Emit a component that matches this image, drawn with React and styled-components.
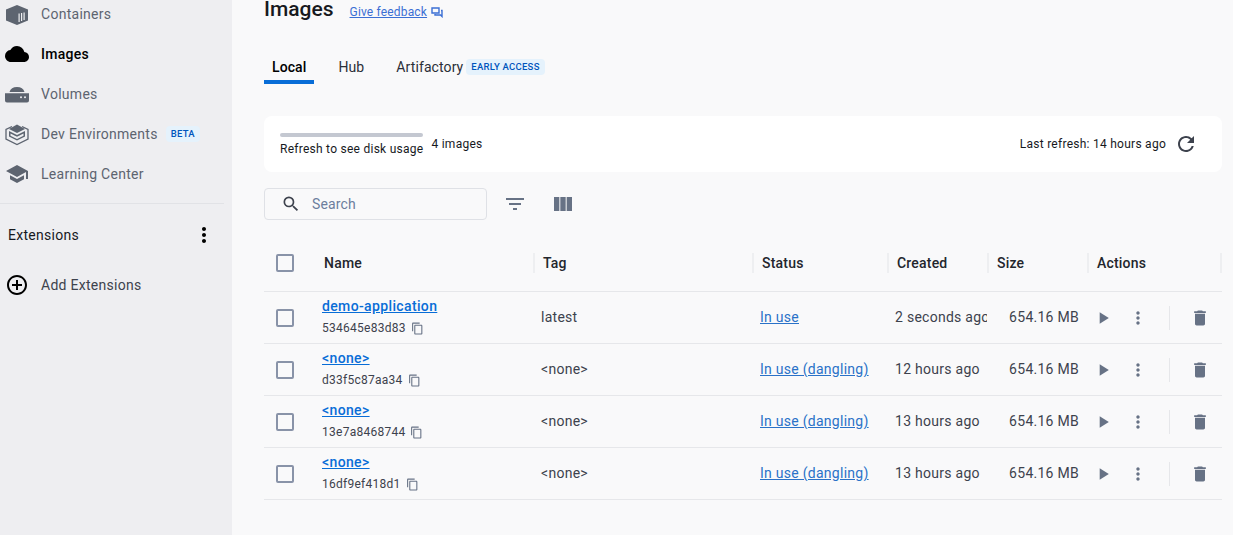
import React from "react";
import styled, {createGlobalStyle} from "styled-components";
import {
    MdAddCircleOutline, MdCloud, MdContentCopy, MdDelete, MdFilterList, MdMoreVert,
    MdPlayArrow, MdRefresh, MdSchool, MdSearch, MdViewColumn
} from "react-icons/md";

const Global = createGlobalStyle`
  html, body { margin: 0; height: 100%; overflow: hidden; }
  body { font-family: Roboto, "Liberation Sans", sans-serif; background: #f9f9fa; color: #17191e; }
`;

const Page = styled.div`display: flex; height: 535px; width: 1233px; overflow: hidden;`;

const Sidebar = styled.nav`width: 232px; flex: none; background: #eeeef1; margin-top: -6px;`;
const NavRow = styled.div`
  height: 40px; display: flex; align-items: center; padding-left: 5px; font-size: 14px; letter-spacing: .28px;
  color: ${p => p.$active ? "#000" : "#5d6470"};
  font-weight: ${p => p.$active ? 500 : 400};
  svg { flex: none; }
`;
const NavIcon = styled.span`width: 36px; height: 24px; display: flex; align-items: center; justify-content: flex-start; flex: none;`;
const Pill = styled.span`
  background: #e5f2fc; color: #0055bc; font-size: 9.5px; font-weight: 500; letter-spacing: .25px;
  border-radius: 4px; padding: 2px 5px; margin-left: ${p => p.$gap || 8}px; line-height: 12px;
`;
const Divider = styled.div`height: 1px; width: 224px; background: #e1e2e6; margin-top: 9px;`;
const ExtensionsRow = styled.div`
  height: 62px; display: flex; align-items: center; justify-content: space-between;
  padding-left: 8px; width: 208px; font-size: 14px; letter-spacing: .28px; color: #17191e;
`;
const AddRow = styled(NavRow)`color: #3d424d; height: 38px;`;

const Main = styled.main`flex: 1; padding: 0 11px 0 32px; min-width: 0;`;
const TitleRow = styled.div`display: flex; align-items: center; height: 18px; gap: 16px;`;
const Title = styled.h1`margin: 0; font-size: 21px; font-weight: 500; line-height: 18px; color: #17191e;`;
const Feedback = styled.a`
  font-size: 12px; letter-spacing: .17px; color: #3b6fd4; text-decoration: underline;
  display: flex; align-items: center; gap: 4px; margin-top: 5px;
`;
const Tabs = styled.div`display: flex; margin-top: 32px; height: 34px; align-items: flex-start; font-size: 14px;`;
const Tab = styled.div`
  height: 26px; padding: 4px 8px 0; display: flex; align-items: center; margin-right: ${p => p.$mr}px; letter-spacing: .1px;
  border-bottom: ${p => p.$active ? "4px solid #086dd7" : "4px solid transparent"};
  font-weight: ${p => p.$active ? 500 : 400};
  color: ${p => p.$active ? "#000" : "#2b2f38"};
`;
const Card = styled.section`
  margin-top: 32px; height: 56px; background: #fff; border-radius: 8px; display: flex; align-items: center;
  justify-content: space-between; padding: 0 24px 0 16px; font-size: 12px; letter-spacing: .26px; color: #17191e;
`;
const Usage = styled.div`display: flex; align-items: center; gap: 8px;`;
const UsageBar = styled.div`width: 143px; height: 4px; border-radius: 2px; background: #c4c8d1; margin-bottom: 5px;`;
const LastRefresh = styled.div`display: flex; align-items: center; gap: 8px;`;

const Toolbar = styled.div`display: flex; align-items: center; margin-top: 16px; height: 32px;`;
const Search = styled.div`
  width: 205px; height: 30px; border: 1px solid #dfe1e6; border-radius: 4px; display: flex; align-items: center;
  padding-left: 16px; gap: 11px; font-size: 14px; color: #6c7e9d; letter-spacing: .15px; margin-right: 16px;
`;
const ToolButton = styled.span`width: 24px; height: 24px; margin: 0 8px 0 ${p => p.$ml || 0}px; display: flex; color: #677285;`;

const columns = "50px 219px 219px 135px 100px 100px 135px";
const HeadRow = styled.div`
  display: grid; grid-template-columns: ${columns}; height: 52px; margin-top: 20px; padding-bottom: 5px; align-items: center;
  border-bottom: 1px solid #e6e7ea; box-sizing: border-box; font-size: 14px; font-weight: 500; letter-spacing: .2px; color: #23262d;
`;
const Row = styled.div`
  display: grid; grid-template-columns: ${columns}; height: 52px; align-items: center; box-sizing: border-box;
  border-bottom: 1px solid #e6e7ea; font-size: 14px; letter-spacing: .27px; color: #3d424d;
`;
const HeadCell = styled.div`
  height: 20px; line-height: 20px; padding-left: ${p => p.$first ? 10 : 8}px;
  border-left: ${p => p.$first ? "0" : "2px solid #eeeff1"};
  ${p => p.$last && "border-right: 2px solid #eeeff1;"}
`;
const Check = styled.span`
  width: 14px; height: 14px; margin-left: 12px; display: block; border: 2px solid #8993a8; border-radius: 2px;
`;
const RowCheck = styled(Check)`margin-top: 1px;`;
const NameCell = styled.div`padding-left: 8px;`;
const NameLink = styled.a`
  display: block; color: #086dd7; font-weight: 500; text-decoration: underline; line-height: 17px; margin-top: -2px; letter-spacing: .36px;
`;
const Hash = styled.div`
  display: flex; align-items: center; gap: 5px; font-size: 12px; letter-spacing: .26px; color: #3d424d; margin-top: 6px; line-height: 14px;
  svg { color: #677285; }
`;
const Cell = styled.div`padding-left: 8px; white-space: nowrap; overflow: hidden; margin-top: -1px;`;
const StatusLink = styled.a`color: #2a72c8; text-decoration: underline;`;
const SizeCell = styled.div`text-align: right; padding-right: 8px; white-space: nowrap; margin-top: -1px;`;
const Actions = styled.div`display: flex; align-items: center; color: #677285; padding-left: 6px;`;
const RowDivider = styled.span`width: 1px; height: 24px; background: #e6e7ea; margin: 0 20px 0 21px;`;
const ActionIcon = styled.span`display: flex; width: ${p => p.$w}px;`;

// docker's own sidebar glyphs, no icon package has these
const ContainersIcon = () => (
    <svg width="24" height="24" viewBox="0 0 24 24">
        <path fill="#5d6470" d="M12 3 23 7.5v11L12 23 1 18.5v-11z"/>
        <path fill="#eeeef1" d="M13.5 11.5h1.2V20h-1.2zM16 11h1.2v8h-1.2zM18.5 10.5h1.2V18h-1.2z"/>
    </svg>
);
const VolumesIcon = () => (
    <svg width="24" height="24" viewBox="0 0 24 24">
        <path fill="#5d6470" d="M4.5 10C5.5 6.5 8 5 12 5s6.500 1.500 7.500 5zM0 11.200h24v7.300a2 2 0 0 1-2 2H2a2 2 0 0 1-2-2z"/>
        <circle cx="16" cy="15.300" r="1" fill="#eeeef1"/><circle cx="20" cy="15.300" r="1" fill="#eeeef1"/>
    </svg>
);
const DevEnvIcon = () => (
    <svg width="24" height="24" viewBox="0 0 24 24" fill="none" stroke="#5d6470" strokeWidth="1.3">
        <path d="M7 4.500 1 7.500v9.500l11 5.500 11-5.500V7.500l-6-3"/>
        <path fill="#5d6470" stroke="none" d="M12 2.500 20 7l-8 4-8-4z"/>
        <path fill="#5d6470" stroke="none" d="m4 9 8 4 8-4v5.500l-8 4-8-4zm1.500 2.400v2.300l6.500 3.200 6.500-3.200v-2.300L12 14.700z"/>
    </svg>
);
const FeedbackIcon = () => (
    <svg width="12" height="12" viewBox="0 0 12 12" fill="none" stroke="#3b6fd4" strokeWidth="1.4">
        <path d="M1 2h7v5H1z"/><path d="M10 4.500h1v6L9.500 9H4V8"/>
    </svg>
);

const images = [
    {name: "demo-application", id: "534645e83d83", tag: "latest", status: "In use", created: "2 seconds ago"},
    {name: "<none>", id: "d33f5c87aa34", tag: "<none>", status: "In use (dangling)", created: "12 hours ago"},
    {name: "<none>", id: "13e7a8468744", tag: "<none>", status: "In use (dangling)", created: "13 hours ago"},
    {name: "<none>", id: "16df9ef418d1", tag: "<none>", status: "In use (dangling)", created: "13 hours ago"},
];

export default function App() {
    return (
        <Page>
            <Global/>
            <Sidebar>
                <NavRow><NavIcon><ContainersIcon/></NavIcon>Containers</NavRow>
                <NavRow $active><NavIcon><MdCloud size={24} color="#000"/></NavIcon>Images</NavRow>
                <NavRow><NavIcon><VolumesIcon/></NavIcon>Volumes</NavRow>
                <NavRow><NavIcon><DevEnvIcon/></NavIcon>Dev Environments<Pill>BETA</Pill></NavRow>
                <NavRow><NavIcon><MdSchool size={24} color="#5d6470"/></NavIcon>Learning Center</NavRow>
                <Divider/>
                <ExtensionsRow>Extensions<MdMoreVert size={24} color="#000"/></ExtensionsRow>
                <AddRow><NavIcon><MdAddCircleOutline size={24} color="#000"/></NavIcon>Add Extensions</AddRow>
            </Sidebar>
            <Main>
                <TitleRow>
                    <Title>Images</Title>
                    <Feedback>Give feedback <FeedbackIcon/></Feedback>
                </TitleRow>
                <Tabs>
                    <Tab $active $mr={16}>Local</Tab>
                    <Tab $mr={16}>Hub</Tab>
                    <Tab $mr={0}>Artifactory<Pill $gap={3}>EARLY ACCESS</Pill></Tab>
                </Tabs>
                <Card>
                    <Usage>
                        <div>
                            <UsageBar/>
                            Refresh to see disk usage
                        </div>
                        <span>4 images</span>
                    </Usage>
                    <LastRefresh>Last refresh: 14 hours ago <MdRefresh size={24} color="#3d424d"/></LastRefresh>
                </Card>
                <Toolbar>
                    <Search><MdSearch size={20} color="#3d424d"/>Search</Search>
                    <ToolButton><MdFilterList size={24}/></ToolButton>
                    <ToolButton $ml={16}><MdViewColumn size={24}/></ToolButton>
                </Toolbar>
                <HeadRow>
                    <div><Check/></div>
                    <HeadCell $first>Name</HeadCell>
                    <HeadCell>Tag</HeadCell>
                    <HeadCell>Status</HeadCell>
                    <HeadCell>Created</HeadCell>
                    <HeadCell>Size</HeadCell>
                    <HeadCell $last>Actions</HeadCell>
                </HeadRow>
                {images.map(image => (
                    <Row key={image.id}>
                        <div><RowCheck/></div>
                        <NameCell>
                            <NameLink>{image.name}</NameLink>
                            <Hash>{image.id}<MdContentCopy size={13}/></Hash>
                        </NameCell>
                        <Cell>{image.tag}</Cell>
                        <Cell><StatusLink>{image.status}</StatusLink></Cell>
                        <Cell>{image.created}</Cell>
                        <SizeCell>654.16 MB</SizeCell>
                        <Actions>
                            <ActionIcon $w={35}><MdPlayArrow size={20}/></ActionIcon>
                            <ActionIcon $w={20}><MdMoreVert size={20}/></ActionIcon>
                            <RowDivider/>
                            <ActionIcon $w={20}><MdDelete size={20}/></ActionIcon>
                        </Actions>
                    </Row>
                ))}
            </Main>
        </Page>
    );
}
